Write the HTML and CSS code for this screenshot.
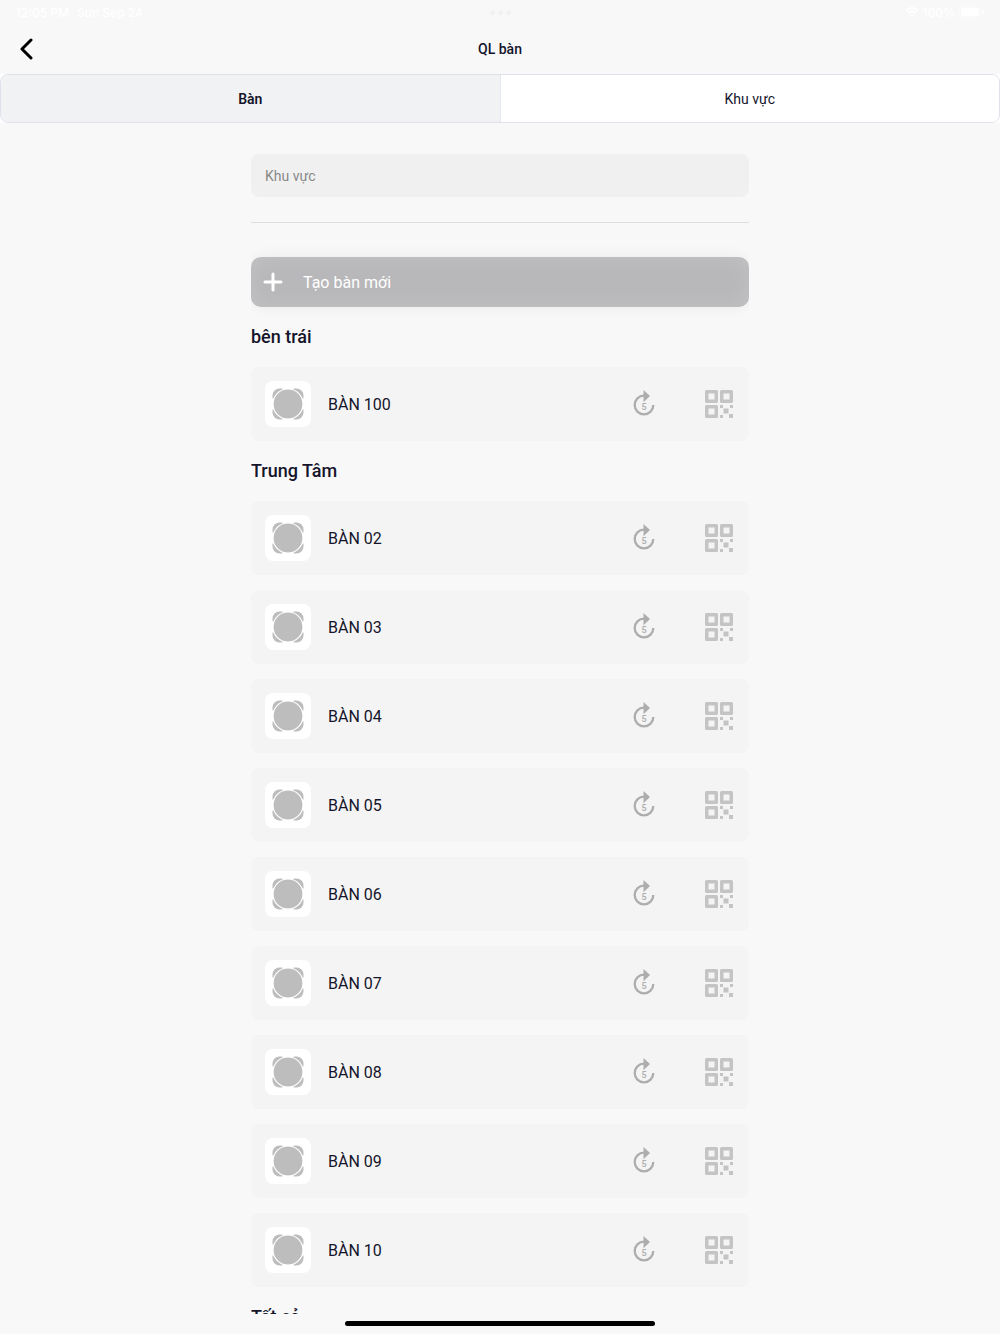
FILE: index.html
```html
<!DOCTYPE html>
<html lang="vi">
<head>
  <meta charset="UTF-8">
  <meta name="viewport" content="width=device-width, initial-scale=1">
  <title>QL bàn</title>
  <link rel="stylesheet" href="styles.css">
</head>
<body>
  <svg class="sprite" aria-hidden="true">
    <symbol id="icon-table" viewBox="0 0 32 32">
      <rect x="0.500" y="0.500" width="31" height="31" rx="7" fill="#bdbdbd"/>
      <path d="M10.500 0h11v32h-11zM0 10.500h32v11H0z" fill="#fff"/>
      <circle cx="16" cy="16" r="15" fill="#bdbdbd" stroke="#fff" stroke-width="1.200"/>
    </symbol>
    <symbol id="icon-reset" viewBox="0 0 22 28">
      <path d="M11 5.700A9.300 9.300 0 1 0 20.300 15" fill="none" stroke="#adadad" stroke-width="2.300"/>
      <path d="M10.500 0v12.200l6.500-6.100z" fill="#adadad"/>
      <text x="11" y="20" text-anchor="middle" class="reset-count">5</text>
    </symbol>
    <symbol id="icon-qr" viewBox="0 0 28 28">
      <path fill="#c4c4c4" fill-rule="evenodd" d="M1.500 0h10a1.500 1.500 0 0 1 1.500 1.500v10a1.500 1.500 0 0 1-1.500 1.500h-10A1.500 1.500 0 0 1 0 11.500v-10A1.500 1.500 0 0 1 1.500 0zM3.500 3.500v6h6v-6zM16.500 0h10A1.500 1.500 0 0 1 28 1.500v10a1.500 1.500 0 0 1-1.500 1.500h-10a1.500 1.500 0 0 1-1.500-1.500v-10A1.500 1.500 0 0 1 16.500 0zM18.500 3.500v6h6v-6zM1.500 15h10a1.500 1.500 0 0 1 1.500 1.500v10a1.500 1.500 0 0 1-1.500 1.500h-10A1.500 1.500 0 0 1 0 26.500v-10A1.500 1.500 0 0 1 1.500 15zM3.500 18.500v6h6v-6z"/>
      <path fill="#c4c4c4" d="M15 15h3v3h-3zM25 15h3v3h-3zM18.500 18.500h5v5h-5zM15 25h3v3h-3zM24 24h4v4h-4z"/>
    </symbol>
  </svg>

  <div class="app">
    <div class="status-bar">
      <div class="status-left">
        <span>12:05 PM</span>
        <span>Sun Sep 24</span>
      </div>
      <div class="status-dots"><i></i><i></i><i></i></div>
      <div class="status-right">
        <svg width="14" height="10" viewBox="0 0 14 10" fill="none" stroke="#fff" stroke-width="2" aria-hidden="true">
          <path d="M1 3.500a8.500 8.500 0 0 1 12 0M3.300 6a5.200 5.200 0 0 1 7.400 0"/>
          <path d="M5 8l2 2 2-2a3 3 0 0 0-4 0z" fill="#fff" stroke="none"/>
        </svg>
        <span>100%</span>
        <svg width="25" height="12" viewBox="0 0 25 12" fill="#fff" aria-hidden="true">
          <rect x="0.500" y="0.500" width="21" height="11" rx="3" fill="none" stroke="#fbfbfb"/>
          <rect x="2" y="2" width="18" height="8" rx="2"/>
          <path d="M23 4v4a2 2 0 0 0 0-4z"/>
        </svg>
      </div>
    </div>

    <header class="header">
      <button type="button" class="back" aria-label="Quay lại">
        <svg width="14" height="22" viewBox="0 0 14 22" fill="none" stroke="#000" stroke-width="3" stroke-linecap="round" stroke-linejoin="round">
          <path d="M11 2L2 11l9 9"/>
        </svg>
      </button>
      <h1>QL bàn</h1>
    </header>

    <nav class="tabs-wrap">
      <div class="tabs">
        <button type="button" class="tab active">Bàn</button>
        <button type="button" class="tab">Khu vực</button>
      </div>
    </nav>

    <main class="main">
      <div class="content">
        <input type="text" class="area-input" placeholder="Khu vực" aria-label="Khu vực">
        <hr class="divider">
        <button type="button" class="create">
          <svg width="20" height="20" viewBox="0 0 20 20" stroke="#fff" stroke-width="3" stroke-linecap="round" aria-hidden="true">
            <path d="M10 2v16M2 10h16"/>
          </svg>
          <span>Tạo bàn mới</span>
        </button>

        <h2>bên trái</h2>
        <ul class="table-list">
          <li class="table-row">
            <span class="thumb"><svg width="32" height="32"><use href="#icon-table"/></svg></span>
            <span class="name">BÀN 100</span>
            <button type="button" class="icon-btn" aria-label="Đặt lại"><svg width="22" height="28"><use href="#icon-reset"/></svg></button>
            <button type="button" class="icon-btn" aria-label="Mã QR"><svg width="28" height="28"><use href="#icon-qr"/></svg></button>
          </li>
        </ul>

        <h2>Trung Tâm</h2>
        <ul class="table-list">
          <li class="table-row">
            <span class="thumb"><svg width="32" height="32"><use href="#icon-table"/></svg></span>
            <span class="name">BÀN 02</span>
            <button type="button" class="icon-btn" aria-label="Đặt lại"><svg width="22" height="28"><use href="#icon-reset"/></svg></button>
            <button type="button" class="icon-btn" aria-label="Mã QR"><svg width="28" height="28"><use href="#icon-qr"/></svg></button>
          </li>
          <li class="table-row">
            <span class="thumb"><svg width="32" height="32"><use href="#icon-table"/></svg></span>
            <span class="name">BÀN 03</span>
            <button type="button" class="icon-btn" aria-label="Đặt lại"><svg width="22" height="28"><use href="#icon-reset"/></svg></button>
            <button type="button" class="icon-btn" aria-label="Mã QR"><svg width="28" height="28"><use href="#icon-qr"/></svg></button>
          </li>
          <li class="table-row">
            <span class="thumb"><svg width="32" height="32"><use href="#icon-table"/></svg></span>
            <span class="name">BÀN 04</span>
            <button type="button" class="icon-btn" aria-label="Đặt lại"><svg width="22" height="28"><use href="#icon-reset"/></svg></button>
            <button type="button" class="icon-btn" aria-label="Mã QR"><svg width="28" height="28"><use href="#icon-qr"/></svg></button>
          </li>
          <li class="table-row">
            <span class="thumb"><svg width="32" height="32"><use href="#icon-table"/></svg></span>
            <span class="name">BÀN 05</span>
            <button type="button" class="icon-btn" aria-label="Đặt lại"><svg width="22" height="28"><use href="#icon-reset"/></svg></button>
            <button type="button" class="icon-btn" aria-label="Mã QR"><svg width="28" height="28"><use href="#icon-qr"/></svg></button>
          </li>
          <li class="table-row">
            <span class="thumb"><svg width="32" height="32"><use href="#icon-table"/></svg></span>
            <span class="name">BÀN 06</span>
            <button type="button" class="icon-btn" aria-label="Đặt lại"><svg width="22" height="28"><use href="#icon-reset"/></svg></button>
            <button type="button" class="icon-btn" aria-label="Mã QR"><svg width="28" height="28"><use href="#icon-qr"/></svg></button>
          </li>
          <li class="table-row">
            <span class="thumb"><svg width="32" height="32"><use href="#icon-table"/></svg></span>
            <span class="name">BÀN 07</span>
            <button type="button" class="icon-btn" aria-label="Đặt lại"><svg width="22" height="28"><use href="#icon-reset"/></svg></button>
            <button type="button" class="icon-btn" aria-label="Mã QR"><svg width="28" height="28"><use href="#icon-qr"/></svg></button>
          </li>
          <li class="table-row">
            <span class="thumb"><svg width="32" height="32"><use href="#icon-table"/></svg></span>
            <span class="name">BÀN 08</span>
            <button type="button" class="icon-btn" aria-label="Đặt lại"><svg width="22" height="28"><use href="#icon-reset"/></svg></button>
            <button type="button" class="icon-btn" aria-label="Mã QR"><svg width="28" height="28"><use href="#icon-qr"/></svg></button>
          </li>
          <li class="table-row">
            <span class="thumb"><svg width="32" height="32"><use href="#icon-table"/></svg></span>
            <span class="name">BÀN 09</span>
            <button type="button" class="icon-btn" aria-label="Đặt lại"><svg width="22" height="28"><use href="#icon-reset"/></svg></button>
            <button type="button" class="icon-btn" aria-label="Mã QR"><svg width="28" height="28"><use href="#icon-qr"/></svg></button>
          </li>
          <li class="table-row">
            <span class="thumb"><svg width="32" height="32"><use href="#icon-table"/></svg></span>
            <span class="name">BÀN 10</span>
            <button type="button" class="icon-btn" aria-label="Đặt lại"><svg width="22" height="28"><use href="#icon-reset"/></svg></button>
            <button type="button" class="icon-btn" aria-label="Mã QR"><svg width="28" height="28"><use href="#icon-qr"/></svg></button>
          </li>
        </ul>

        <h2>Tất cả</h2>
      </div>
    </main>

    <div class="home-bar"><span></span></div>
  </div>
</body>
</html>
```

FILE: styles.css
```css
* {
  box-sizing: border-box;
}
body {
  margin: 0;
  background: #f8f8f8;
  color: #14142b;
  font-family: Roboto, sans-serif;
  font-size: 14px;
}
button, input {
  font-family: inherit;
  color: inherit;
  border: none;
  margin: 0;
}
button {
  cursor: pointer;
}
svg {
  display: block;
}
.sprite {
  display: none;
}
.app {
  display: flex;
  flex-direction: column;
  height: 100vh;
}

/* status bar */
.status-bar {
  display: grid;
  grid-template-columns: 1fr auto 1fr;
  align-items: center;
  height: 24px;
  padding: 0 16px;
  color: #fff;
  font-family: Inter, sans-serif;
  font-size: 12px;
  font-weight: 500;
}
.status-left {
  display: flex;
  gap: 8px;
}
.status-dots {
  display: flex;
  gap: 3px;
}
.status-dots i {
  width: 5px;
  height: 5px;
  border-radius: 50%;
  background: #f1f1f1;
}
.status-right {
  display: flex;
  justify-content: flex-end;
  align-items: center;
  gap: 4px;
}

/* header */
.header {
  display: grid;
  grid-template-columns: 1fr auto 1fr;
  align-items: center;
  height: 50px;
  padding: 0 12px;
}
.back {
  justify-self: start;
  padding: 8px;
  background: none;
}
h1 {
  margin: 0;
  font-size: 14px;
  font-weight: 500;
}

/* tabs */
.tabs-wrap {
  background: #fff;
}
.tabs {
  display: flex;
  height: 49px;
  border: 1px solid #dfe0ea;
  border-radius: 8px;
  overflow: hidden;
}
.tab {
  flex: 1;
  background: #fff;
  font-size: 14px;
}
.tab.active {
  background: #f1f2f4;
  border-right: 1px solid #e6e7ee;
  font-weight: 600;
}

/* list */
.main {
  flex: 1;
  min-height: 0;
  overflow: hidden;
}
.content {
  width: calc(50% - 2px);
  margin: 0 auto;
  padding-top: 31px;
  overflow: hidden;
}
.area-input {
  display: block;
  width: 100%;
  height: 43px;
  padding: 0 14px;
  border-radius: 8px;
  background: #f0f0f0;
  font-size: 14px;
}
.area-input::placeholder {
  color: #888;
}
.divider {
  height: 1px;
  margin: 25px 0 34px;
  border: none;
  background: #dedede;
}
.create {
  display: flex;
  align-items: center;
  gap: 20px;
  width: 100%;
  height: 50px;
  padding: 0 12px;
  border-radius: 10px;
  background: #b8b8ba;
  box-shadow: 0 0 16px rgba(0, 0, 0, 0.06), inset 0 0 20px rgba(255, 255, 255, 0.16);
  color: #fff;
  font-size: 16px;
}
h2 {
  margin: 0;
  font-size: 18px;
  font-weight: 500;
  line-height: 60px;
}
.table-list {
  display: flex;
  flex-direction: column;
  gap: 15px;
  margin: 0;
  padding: 0;
  list-style: none;
}
.table-row {
  display: flex;
  align-items: center;
  height: 74px;
  padding: 0 16px 0 14px;
  border-radius: 8px;
  background: #f4f4f4;
}
.thumb {
  display: grid;
  place-items: center;
  width: 46px;
  height: 46px;
  border-radius: 8px;
  background: #fff;
}
.name {
  flex: 1;
  margin-left: 17px;
  font-size: 16px;
}
.icon-btn {
  padding: 0;
  background: none;
}
.icon-btn + .icon-btn {
  margin-left: 50px;
}
.reset-count {
  fill: #adadad;
  font-size: 9px;
  font-weight: 500;
}

/* home indicator */
.home-bar {
  display: flex;
  justify-content: center;
  height: 20px;
  padding-top: 7px;
}
.home-bar span {
  width: 31%;
  height: 5px;
  border-radius: 3px;
  background: #000;
}
```
